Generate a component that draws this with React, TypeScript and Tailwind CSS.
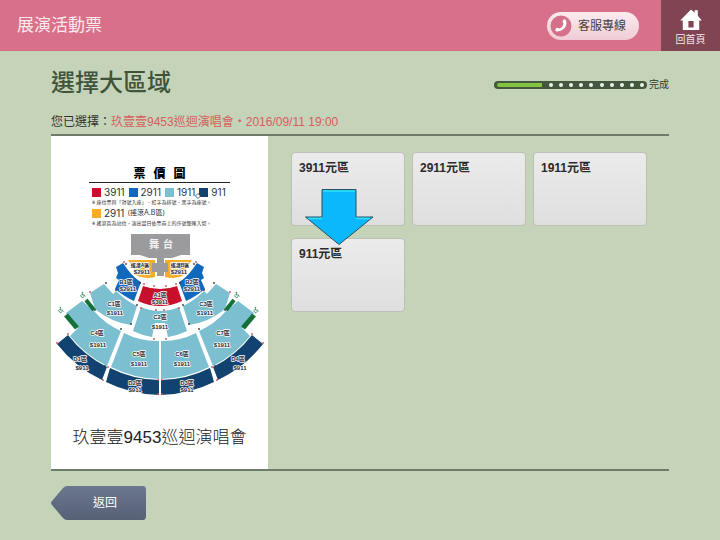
import clsx from 'clsx';

const EVENT_NAME = '玖壹壹9453巡迴演唱會';
const EVENT_TIME = '2016/09/11 19:00';

const ZONES = ['3911元區', '2911元區', '1911元區', '911元區'];

const STEPS_LEFT = 10;

const PRICES = [
	{ label: '3911', swatch: 'bg-[#c8102e]' },
	{ label: '2911', swatch: 'bg-[#1169bd]' },
	{ label: '1911', swatch: 'bg-[#7cbfd0]' },
	{ label: '911', swatch: 'bg-[#12426f]' },
];

// [name, price, name x, name y, price x, price y]
const SEAT_LABELS: [string, string, number, number, number, number][] = [
	['B1區', '$2911', 126, 284, 128, 291],
	['B2區', '$2911', 192, 284, 192, 291],
	['A1區', '$3911', 160, 297, 160, 304],
	['C1區', '$1911', 114, 306, 115, 315],
	['C3區', '$1911', 206, 306, 205, 315],
	['C2區', '$1911', 160, 319, 160, 329],
	['C4區', '$1911', 97, 335, 98, 347],
	['C7區', '$1911', 223, 335, 222, 347],
	['C5區', '$1911', 139, 356, 139, 366],
	['C6區', '$1911', 182, 356, 182, 366],
	['D1區', '$911', 80, 361, 82, 370],
	['D4區', '$911', 238, 361, 240, 370],
	['D2區', '$911', 135, 385, 135, 392],
	['D3區', '$911', 187, 385, 187, 392],
];

const RED_DOTS = [
	[57, 343], [68, 334], [103, 380], [108, 367], [158, 380], [158, 394],
	[90, 292], [124, 262], [144, 284], [141, 308], [154, 339], [156, 310], [154, 286],
];

const DARK_DOTS = [
	[106, 283], [126, 264], [140, 283], [137, 305], [131, 324], [121, 329], [95, 310], [105, 366], [116, 290],
];

function SeatHalf() {
	return (
		<g>
			<path d="M116 267 L123 263 L128 270 Q134 278 141 282 L134 301 Q125 297 115 289 L119 280 L116 278 L118 273 Z" fill="#1169bd" />
			<path d="M128 260 H155 V264 H152 V272 H155 V277 Q142 280 133 273 L134 269 Z" fill="#f5ae27" />
			<path d="M143 286 Q151 289 160 289 V306 Q148 306 138 301 Z" fill="#c8102e" />
			<path d="M90 293 L104 284 L113 294 L116 291 Q126 301 137 306 L131 325 A72 72 0 0 1 95 309 Z" fill="#7cbfd0" />
			<path d="M141 307 Q150 311 160 311 V323 H155 L152 337 A68 68 0 0 1 133 331 Z" fill="#7cbfd0" />
			<path d="M66 313 L82 301 L94 311 A75 75 0 0 0 121 331 L107 366 A112 112 0 0 1 70 336 L78 328 Z" fill="#7cbfd0" />
			<path d="M124 333 A73 73 0 0 0 159 341 V379 A112 112 0 0 1 111 367 Z" fill="#7cbfd0" />
			<path d="M57 344 L68 335 A112 112 0 0 0 107 367 L102 380 A127 127 0 0 1 57 344 Z" fill="#12426f" />
			<path d="M110 368 A112 112 0 0 0 159 380 V395 A127 127 0 0 1 106 382 Z" fill="#12426f" />
			<path d="M86 300 L94 310" stroke="#147039" strokeWidth="4" />
			<path d="M66 315 L77 328" stroke="#147039" strokeWidth="5" />
			{RED_DOTS.map(([x, y]) => (
				<circle key={`${x}-${y}`} cx={x} cy={y} r="0.9" fill="#d0504f" />
			))}
			{DARK_DOTS.map(([x, y]) => (
				<circle key={`${x}-${y}`} cx={x} cy={y} r="0.9" fill="#3a3a44" />
			))}
		</g>
	);
}

function Wheelchair({ x, y }: { x: number; y: number }) {
	return (
		<g transform={`translate(${x} ${y})`} stroke="#1c7a45" strokeWidth="0.8" fill="none">
			<circle cx="1.4" cy="0.6" r="0.4" />
			<path d="M1.4 1.2 V3 H3.4 L4.2 4.8 M0.9 2.4 A1.6 1.6 0 1 0 3 4.6" />
		</g>
	);
}

function SeatMap() {
	return (
		<svg viewBox="51 230 217 170" className="block w-full" role="img" aria-label="票價圖">
			<SeatHalf />
			<g transform="translate(320 0) scale(-1 1)">
				<SeatHalf />
			</g>
			<path d="M131 234 H190 V255 H181 L172 258 H164 V263 H168 V272 H164 V276 H157 V272 H152 V263 H157 V258 H149 L140 255 H131 Z" fill="#9b9b9d" />
			<Wheelchair x={81} y={292} />
			<Wheelchair x={59} y={307} />
			<Wheelchair x={235} y={292} />
			<Wheelchair x={254} y={307} />
			<g fontSize="10" fontWeight="700" fill="#f4f4f4" textAnchor="middle">
				<text x="154" y="248">舞</text>
				<text x="168" y="248">台</text>
			</g>
			<g
				fontSize="6"
				fontWeight="700"
				fill="#1d2733"
				stroke="#ffffff"
				strokeWidth="1.4"
				strokeLinejoin="round"
				paintOrder="stroke"
				textAnchor="middle"
			>
				<text x="140" y="267" fontSize="5">搖滾A區</text>
				<text x="142" y="274">$2911</text>
				<text x="180" y="267" fontSize="5">搖滾B區</text>
				<text x="179" y="274">$2911</text>
				{SEAT_LABELS.map(([name, price, nx, ny, px, py]) => (
					<g key={name}>
						<text x={nx} y={ny}>{name}</text>
						<text x={px} y={py}>{price}</text>
					</g>
				))}
			</g>
		</svg>
	);
}

function PricePoster() {
	return (
		<figure className="bg-white pt-[30px] pb-[19px]">
			<div className="mx-[38px] flex justify-center gap-2 border-b border-[#222] text-[12px] leading-4 font-black text-black">
				<span>票</span>
				<span>價</span>
				<span>圖</span>
			</div>
			<div className="ml-[41px] pt-0.5 font-['Inter','Noto_Sans_CJK_TC',sans-serif] text-[10px] leading-[14px] text-[#333]">
				<ul className="flex gap-1">
					{PRICES.map((price) => (
						<li key={price.label} className="relative flex items-center gap-[3px]">
							<span className={clsx('size-[9px]', price.swatch)} />
							{price.label}
							{price.label === '911' && (
								<svg viewBox="0 0 6 6" className="absolute -left-1 bottom-0 size-1.5">
									<path d="M3 0.5 L5.5 3 L3 5.5 L0.5 3 Z" fill="#fff" stroke="#333" strokeWidth="0.8" />
								</svg>
							)}
						</li>
					))}
				</ul>
				<p className="text-[5px] leading-[6px] whitespace-nowrap">※ 座位票與「對號入座」．紅字為排號．黑字為座號。</p>
				<p className="mt-px flex items-center gap-[3px]">
					<span className="size-[9px] bg-[#f5ae27]" />
					2911
					<span className="text-[7px]">(搖滾A.B區)</span>
				</p>
				<p className="text-[5px] leading-[6px] whitespace-nowrap">※ 搖滾區為站位，演出當日依票券上的序號整隊入場。</p>
			</div>
			<div className="pt-1">
				<SeatMap />
			</div>
			<figcaption className="pt-[26px] text-center text-[17px] leading-6 font-light text-[#222]">{EVENT_NAME}</figcaption>
		</figure>
	);
}

function ProgressBar() {
	return (
		<div className="flex items-center gap-0.5 pt-1 text-[10px] leading-4 text-[#33402f]">
			<div
				role="progressbar"
				aria-label="完成"
				aria-valuenow={4}
				aria-valuemax={14}
				className="flex h-2 w-[153px] items-center rounded-full bg-[#46573f] pr-[3px] pl-[3px]"
			>
				<span className="h-1 w-[45px] rounded-l-full bg-[#82c341]" />
				<span className="flex flex-1 justify-between pl-[7px]">
					{Array.from({ length: STEPS_LEFT }, (_, i) => (
						<span key={i} className="size-1 rounded-full bg-[#eef3ea]" />
					))}
				</span>
			</div>
			<span>完成</span>
		</div>
	);
}

function Header() {
	return (
		<header className="flex h-[51px] items-stretch bg-[#d9708a]">
			<h2 className="flex flex-1 items-center pl-[17px] text-[17px] text-[#fbe9ee]">展演活動票</h2>
			<button
				type="button"
				className="mr-[22px] flex h-7 w-[92px] items-center gap-1.5 self-center rounded-full bg-linear-to-b from-[#fbecef] to-[#f0ccd5] pl-[3px] text-[12px] text-[#4a3a3f]"
			>
				<svg viewBox="0 0 22 22" className="size-[22px]">
					<circle cx="11" cy="11" r="10.5" fill="#d4708a" />
					<path
						d="M13.6 4.6 Q15.4 3.8 16 5.8 Q17.6 10.6 13.6 14 Q10.4 16.8 6.4 16.6 Q5 16.2 5.4 14.6 L6.4 13 Q7.4 12.4 8.6 13.2 L9.8 13.4 Q12.8 12 13.6 8.8 L12.8 7.8 Q12 6 13.6 4.6 Z"
						fill="#fff"
					/>
				</svg>
				客服專線
			</button>
			<a href="#" className="flex w-[59px] flex-col items-center gap-px bg-[#804453] pt-[9px] text-[10px] leading-4 text-[#f7e6ea]">
				<svg viewBox="0 0 22 22" className="size-[22px]">
					<path
						d="M11 0.5 L14.6 3.8 V1.2 H17.8 V6.8 L21.8 11.4 H19.2 V21 H2.8 V11.4 H0.2 Z M8.4 12 V18.6 H13.6 V12 Z"
						fill="#fff"
						fillRule="evenodd"
					/>
				</svg>
				回首頁
			</a>
		</header>
	);
}

export default function App() {
	return (
		<div className="min-h-screen bg-[#c5d3b8] font-['Liberation_Sans','Noto_Sans_CJK_TC',sans-serif] text-[#333]">
			<Header />
			<main className="px-[51px] pt-4">
				<div className="flex items-center justify-between">
					<h1 className="text-2xl leading-8 font-medium text-[#40543a]">選擇大區域</h1>
					<ProgressBar />
				</div>
				<p className="mt-3.5 mb-[3px] text-[12px] leading-[18px]">
					您已選擇：
					<span className="text-[#d4605f]">
						{EVENT_NAME}‧{EVENT_TIME}
					</span>
				</p>

				<section className="grid grid-cols-[217px_1fr] border-y-2 border-[#6f7c6a]">
					<PricePoster />
					<div className="relative flex flex-wrap content-start gap-x-[7px] gap-y-3 pt-4 pl-[23px]">
						{ZONES.map((zone) => (
							<button
								key={zone}
								type="button"
								className="flex h-[74px] w-[114px] rounded border border-[#bcc0b8] bg-linear-to-b from-[#ebebeb] to-[#dfdfdf] px-[7px] pt-1.5 text-[12px] leading-[18px] font-bold text-[#2b2b2b]"
							>
								{zone}
							</button>
						))}
						<svg viewBox="0 0 70 58" className="pointer-events-none absolute top-[52px] left-9 h-[58px] w-[70px]">
							<path d="M18 1.5 H52 V29 H69 L35 56.5 L1.5 29 H18 Z" fill="#0bb8fb" stroke="#28505f" strokeWidth="1" />
							<path d="M19 3 H51 M4 30.5 H18 M52 30.5 H66" stroke="#35e0fb" strokeWidth="1.6" />
						</svg>
					</div>
				</section>

				<button type="button" className="relative mt-[15px] flex h-[34px] w-[96px] items-center justify-center pl-3 text-[12px] text-white">
					<svg viewBox="0 0 96 34" className="absolute inset-0 size-full">
						<defs>
							<linearGradient id="back" x1="0" y1="0" x2="0" y2="1">
								<stop offset="0" stopColor="#6c7890" />
								<stop offset="1" stopColor="#566075" />
							</linearGradient>
						</defs>
						<path
							d="M16 0 H92 Q95 0 95 4 V30 Q95 34 92 34 H16 Q14 34 12 32 L1 19 Q-1 17 1 15 L12 2 Q14 0 16 0 Z"
							fill="url(#back)"
						/>
					</svg>
					<span className="relative">返回</span>
				</button>
			</main>
		</div>
	);
}
